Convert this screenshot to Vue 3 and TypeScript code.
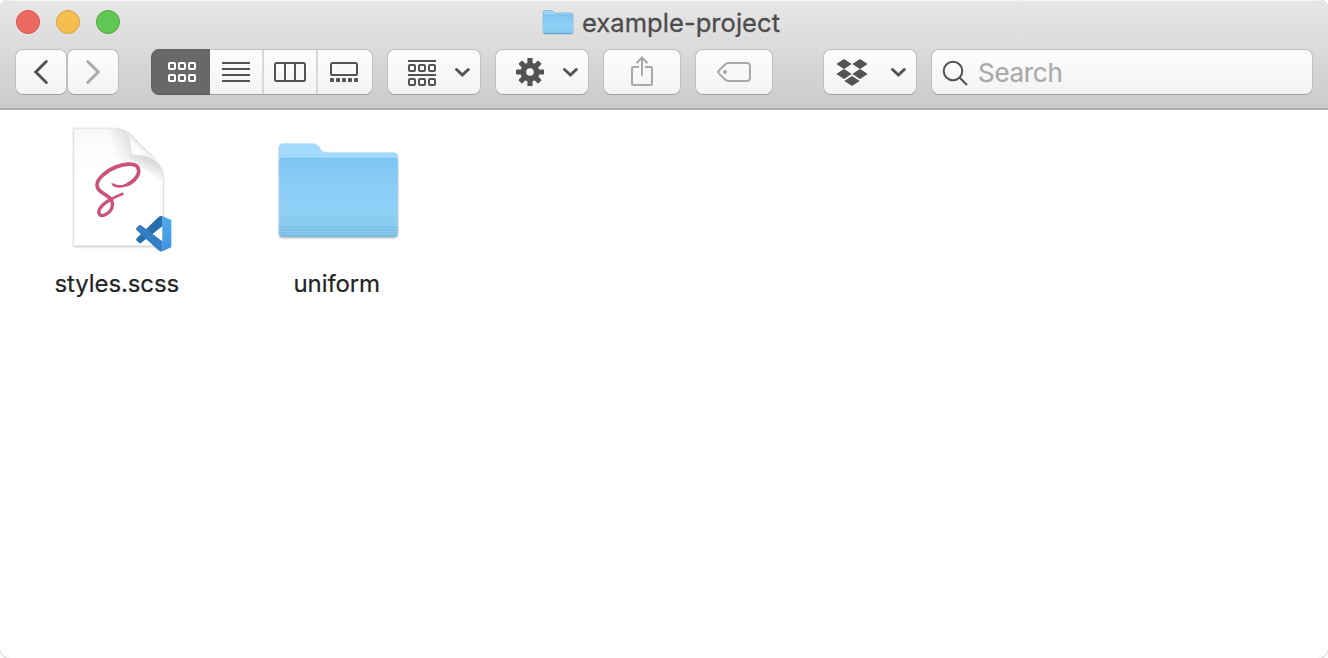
<script setup lang="ts">
const cells = [0, 10, 20]
const dots = [0, 6, 12, 18, 24]
const teeth = [0, 45, 90, 135, 180, 225, 270, 315]
</script>

<template>
  <div class="window">
    <header class="chrome">
      <div class="title-row">
        <div class="lights">
          <span class="light red"></span>
          <span class="light yellow"></span>
          <span class="light green"></span>
        </div>
        <div class="title">
          <svg class="mini-folder" width="32" height="26" viewBox="0 0 32 26">
            <path d="M1 3.500Q1 1.500 3 1.500H9.500Q10.500 1.500 11.500 3Q12.200 4 14 4H29Q31 4 31 6V23Q31 25 29 25H3Q1 25 1 23Z" fill="#9bd6f5" stroke="#6da9cc" stroke-width=".6" />
            <path d="M1.400 6H30.600V23.500Q30.600 24.500 29 24.500H3Q1.400 24.500 1.400 23.500Z" fill="url(#folderFront)" />
            <path d="M1.500 6H30.500" stroke="#71b9e3" stroke-width=".8" />
            <path d="M2 24.400H30" stroke="#5fa5cf" stroke-width="1" />
          </svg>
          <span class="title-text">example-project</span>
        </div>
      </div>

      <nav class="toolbar">
        <div class="pair">
          <button class="btn nav-btn" aria-label="Back">
            <svg viewBox="16 49 50 46"><path class="thick" d="M46.300 61.500L35.800 72L46.300 82.500" /></svg>
          </button>
          <button class="btn nav-btn dim" aria-label="Forward">
            <svg viewBox="68 49 50 46"><path class="thick" d="M87.700 61.500L98.200 72L87.700 82.500" /></svg>
          </button>
        </div>

        <div class="btn views">
          <button class="seg active" aria-label="Icons">
            <svg viewBox="151 49 59 46">
              <template v-for="c in cells" :key="c">
                <rect :x="169 + c" y="63" width="6" height="6" rx="1" />
                <rect :x="169 + c" y="75" width="6" height="6" rx="1" />
              </template>
            </svg>
          </button>
          <button class="seg" aria-label="List">
            <svg viewBox="210 49 53 46"><path d="M222 63H250M222 69H250M222 75H250M222 81H250" /></svg>
          </button>
          <button class="seg divided" aria-label="Columns">
            <svg viewBox="263 49 54 46">
              <rect x="275" y="63" width="30" height="18" rx="1.500" />
              <path d="M285 63V81M295 63V81" />
            </svg>
          </button>
          <button class="seg divided last" aria-label="Gallery">
            <svg viewBox="317 49 55 46">
              <rect x="331" y="63" width="26" height="12" rx="1.500" />
              <rect v-for="d in dots" :key="d" class="solid" :x="330 + d" y="78" width="4" height="4" rx=".8" />
            </svg>
          </button>
        </div>

        <button class="btn menu" aria-label="Group">
          <svg viewBox="388 49 92 46">
            <path d="M408 61H436M408 75H436" />
            <template v-for="c in cells" :key="c">
              <rect :x="409 + c" y="65" width="6" height="6" rx="1" />
              <rect :x="409 + c" y="79" width="6" height="6" rx="1" />
            </template>
            <path class="thick" d="M456.500 69.500L462.400 75L468.300 69.500" />
          </svg>
        </button>

        <button class="btn menu" aria-label="Actions">
          <svg viewBox="496 49 92 46">
            <circle cx="530" cy="72" r="6.700" stroke-width="5.800" />
            <rect
              v-for="t in teeth"
              :key="t"
              class="solid"
              x="527.400"
              y="58"
              width="5.200"
              height="6"
              rx=".6"
              :transform="`rotate(${t} 530 72)`"
            />
            <path class="thick" d="M564.500 69.500L570.400 75L576.300 69.500" />
          </svg>
        </button>

        <button class="btn single dim" aria-label="Share">
          <svg viewBox="604 49 76 46">
            <path d="M639 67H633.500Q632 67 632 68.500V83.500Q632 85 633.500 85H650.500Q652 85 652 83.500V68.500Q652 67 650.500 67H645M642 75.700V57.500M636.500 63.300L642 57.500L647.500 63.300" />
          </svg>
        </button>

        <button class="btn single dim" aria-label="Tags">
          <svg viewBox="696 49 76 46">
            <path d="M728.500 63H747Q750 63 750 66V78Q750 81 747 81H728.500Q726.500 81 725 79.500L719 73.500Q717.500 72 719 70.500L725 64.500Q726.500 63 728.500 63Z" />
            <circle class="solid" cx="725" cy="72" r="2" />
          </svg>
        </button>

        <button class="btn menu dropbox" aria-label="Dropbox">
          <svg viewBox="824 49 92 46">
            <path class="solid" d="M836.300 64L844 59L851.700 64L844 69ZM852.300 64L860 59L867.700 64L860 69ZM836.300 74L844 69L851.700 74L844 79ZM852.300 74L860 69L867.700 74L860 79ZM844.300 81L852 76L859.700 81L852 86Z" />
            <path class="thick" d="M892.500 69.500L898.400 75L904.300 69.500" />
          </svg>
        </button>

        <label class="btn search">
          <svg viewBox="932 49 44 46">
            <circle cx="953" cy="71" r="9.300" />
            <path d="M959.800 77.800L967 85" />
          </svg>
          <span class="placeholder">Search</span>
        </label>
      </nav>
    </header>

    <main class="files">
      <figure class="item">
        <svg class="art" width="140" height="150" viewBox="0 0 420 450">
          <defs>
            <linearGradient id="paper" x1="0" y1="0" x2="0" y2="1">
              <stop offset="0" stop-color="#f7f7f7" />
              <stop offset=".2" stop-color="#fdfdfd" />
              <stop offset=".4" stop-color="#fff" />
            </linearGradient>
            <linearGradient id="shade" gradientUnits="userSpaceOnUse" x1="268" y1="172" x2="295" y2="115">
              <stop offset="0" stop-color="#999" stop-opacity="0" />
              <stop offset="1" stop-color="#999" stop-opacity=".5" />
            </linearGradient>
            <linearGradient id="shadeTop" gradientUnits="userSpaceOnUse" x1="180" y1="80" x2="243" y2="60">
              <stop offset="0" stop-color="#999" stop-opacity="0" />
              <stop offset="1" stop-color="#999" stop-opacity=".28" />
            </linearGradient>
            <linearGradient id="flap" gradientUnits="userSpaceOnUse" x1="242" y1="122" x2="274" y2="88">
              <stop offset="0" stop-color="#ededed" />
              <stop offset=".4" stop-color="#fff" />
              <stop offset=".75" stop-color="#f8f8f8" />
              <stop offset="1" stop-color="#dedede" />
            </linearGradient>
            <linearGradient id="codeSide" x1="0" y1="0" x2="0" y2="1">
              <stop offset="0" stop-color="#54acef" />
              <stop offset="1" stop-color="#3a92df" />
            </linearGradient>
          </defs>
          <path class="paper" d="M71 40H198Q222 40 241 58L309 126Q339 157 339 188V392H71Z" fill="url(#paper)" stroke="#dfdfdf" stroke-width="2" />
          <path d="M160 41H198Q232 41 242 68V122L220 150Q180 100 160 41Z" fill="url(#shadeTop)" />
          <path d="M242 121Q301 118 322 143Q338 162 338 188V210Q300 165 236 135Z" fill="url(#shade)" />
          <path d="M206 41Q226 44 243 60L308 125Q296 118 242 121Q246 78 232 58Q222 46 206 41Z" fill="url(#flap)" stroke="#d6d6d6" stroke-width="1" />

          <g fill="none" stroke="#cd5277" stroke-linecap="round" stroke-linejoin="round">
            <path stroke-width="4" d="M186 206Q190 211 196 213" />
            <path stroke-width="8" d="M191 210Q202 216 220 213C248 206 270 181 266 161C261 141 225 144 193 157" />
            <path stroke-width="11" d="M232 209C255 198 270 178 265 161C260 144 229 144 198 156C165 169 141 193 141 210C141 231 166 235 180 250" />
            <path stroke-width="10" d="M180 250C196 268 184 291 164 300C151 306 143 296 148 284C154 269 168 261 184 252" />
            <path stroke-width="8" d="M180 255Q193 246 217 237" />
          </g>

          <path d="M337 303L364 315V397L337 409Z" fill="url(#codeSide)" />
          <path d="M337 303V334L273 384Q269 386 265 382L259 376Q257 373 260 370L325 307Q330 302 337 303Z" fill="#286fae" />
          <path d="M259 339L265 332Q269 329 273 331L337 379V409Q329 410 324 405L260 346Q256 343 259 339Z" fill="#377fc5" />
        </svg>
        <figcaption class="name scss">styles.scss</figcaption>
      </figure>

      <figure class="item">
        <svg class="art" width="150" height="150" viewBox="0 0 150 150">
          <defs>
            <linearGradient id="folderFront" x1="0" y1="0" x2="0" y2="1">
              <stop offset="0" stop-color="#81c7f4" />
              <stop offset=".65" stop-color="#8fd0f6" />
              <stop offset="1" stop-color="#85c6eb" />
            </linearGradient>
          </defs>
          <g class="folder">
            <path d="M14 33Q14 28.500 18.500 28.500H47.500Q51.500 28.500 54 32L56 35Q58 37.500 62 37.500H128.500Q132.700 37.500 132.700 42V118Q132.700 121.800 129 121.800H18Q14 121.800 14 118Z" fill="#a3daff" />
            <path d="M14 46Q14 43 17 43H129.700Q132.700 43 132.700 46V118Q132.700 121.800 129 121.800H18Q14 121.800 14 118Z" fill="url(#folderFront)" />
            <path d="M14.500 45Q15.500 43.300 18 43.300H129Q131.500 43.300 132.300 45" fill="none" stroke="#75bbe8" stroke-width=".7" />
            <path d="M14.300 112H132.500M14.300 115H132.500M14.300 118H132.500" stroke="#76b9e2" stroke-width=".9" />
            <path d="M15.500 121H131" stroke="#6cb0da" stroke-width="1.200" />
          </g>
        </svg>
        <figcaption class="name uniform">uniform</figcaption>
      </figure>
    </main>
  </div>
</template>

<style>
body {
  background: #fff;
}
</style>

<style scoped>
.window {
  width: 1328px;
  height: 658px;
  box-sizing: border-box;
  overflow: hidden;
  border-radius: 10px;
  background: #fff;
  box-shadow: 0 0 0 1px #ddd;
  font-family: Inter, Roboto, "Liberation Sans", sans-serif;
}
.chrome {
  height: 110px;
  box-sizing: border-box;
  background: linear-gradient(#e7e7e7, #cbcbcb);
  border-bottom: 2px solid #acacac;
  box-shadow: inset 0 1px #f4f4f4;
}
.title-row {
  display: grid;
  grid-template-columns: 542px 1fr;
  height: 49px;
}
.lights {
  display: flex;
  gap: 16px;
  padding: 10px 0 0 16px;
}
.light {
  width: 24px;
  height: 24px;
  box-sizing: border-box;
  border-radius: 50%;
  border: 1px solid;
}
.red { background: #ec6a5f; border-color: #d45449; }
.yellow { background: #f5bf4f; border-color: #d9a13c; }
.green { background: #61c654; border-color: #4bab3d; }
.title {
  display: flex;
  align-items: flex-start;
  padding-top: 9px;
}
.title-text {
  margin: -2px 0 0 8px;
  font-size: 25.500px;
  line-height: 32px;
  letter-spacing: .05px;
  color: #4c4c4c;
  -webkit-text-stroke: .3px #4c4c4c;
  white-space: nowrap;
}
.toolbar {
  display: flex;
  gap: 16px;
  padding: 0 16px;
}
.pair {
  display: flex;
  gap: 2px;
  margin-right: 18px;
}
button {
  appearance: none;
  border: 0;
  padding: 0;
  margin: 0;
  background: none;
  font: inherit;
}
.btn {
  height: 44px;
  margin-top: 1px;
  display: flex;
  flex: none;
  border-radius: 7px;
  background: linear-gradient(#fdfdfd, #f3f3f3);
  box-shadow: 0 1px 0 #a0a0a0, 0 0 0 1px #bfbfbf;
}
.btn svg {
  display: block;
  width: 100%;
  height: 46px;
  margin-top: -1px;
  fill: none;
  stroke: #535353;
  stroke-width: 2;
}
.btn svg .thick {
  stroke-width: 3;
  stroke-linecap: round;
  stroke-linejoin: miter;
}
.btn svg .solid {
  fill: #535353;
  stroke: none;
}
.btn.dim svg {
  stroke: #a9a9a9;
}
.btn.dim svg .solid {
  fill: #a9a9a9;
}
.nav-btn { width: 50px; }
.views { width: 220px; }
.seg {
  width: 53px;
  height: 44px;
  box-sizing: border-box;
}
.seg.active {
  width: 58px;
  border-radius: 7px 0 0 7px;
  background: #686868;
  box-shadow: -1px 0 #626262, 0 -1px #5e5e5e, 0 1px #5c5c5c;
}
.seg.active svg {
  width: 59px;
  margin-left: -1px;
  stroke: #fff;
}
.seg.divided {
  width: 54px;
  box-shadow: inset 1px 0 #d8d8d8, -1px 0 #d8d8d8;
}
.seg.last { width: 55px; }
.menu { width: 92px; }
.single { width: 76px; }
.dropbox { margin-left: 36px; }
.search {
  width: 380px;
}
.search svg {
  width: 44px;
  flex: none;
}
.placeholder {
  padding-left: 2px;
  font-size: 26px;
  line-height: 46px;
  letter-spacing: -.3px;
  color: #aaa;
  -webkit-text-stroke: .2px #aaa;
}
.files {
  display: flex;
}
.item {
  margin: 0;
  width: 221px;
}
.item:first-child {
  width: 265px;
  padding-left: 50px;
  box-sizing: border-box;
}
.art {
  display: block;
  margin-top: 5px;
}
.paper {
  filter: drop-shadow(0 3px 3px #c8c8c8);
}
.folder {
  filter: drop-shadow(0 1px 1px #aaa);
}
.name {
  font-size: 24px;
  line-height: 32px;
  margin-top: 3px;
  letter-spacing: -.1px;
  color: #242424;
  -webkit-text-stroke: .2px #242424;
  white-space: nowrap;
}
.scss { padding-left: 4.500px; }
.uniform { padding-left: 28.500px; }
</style>
